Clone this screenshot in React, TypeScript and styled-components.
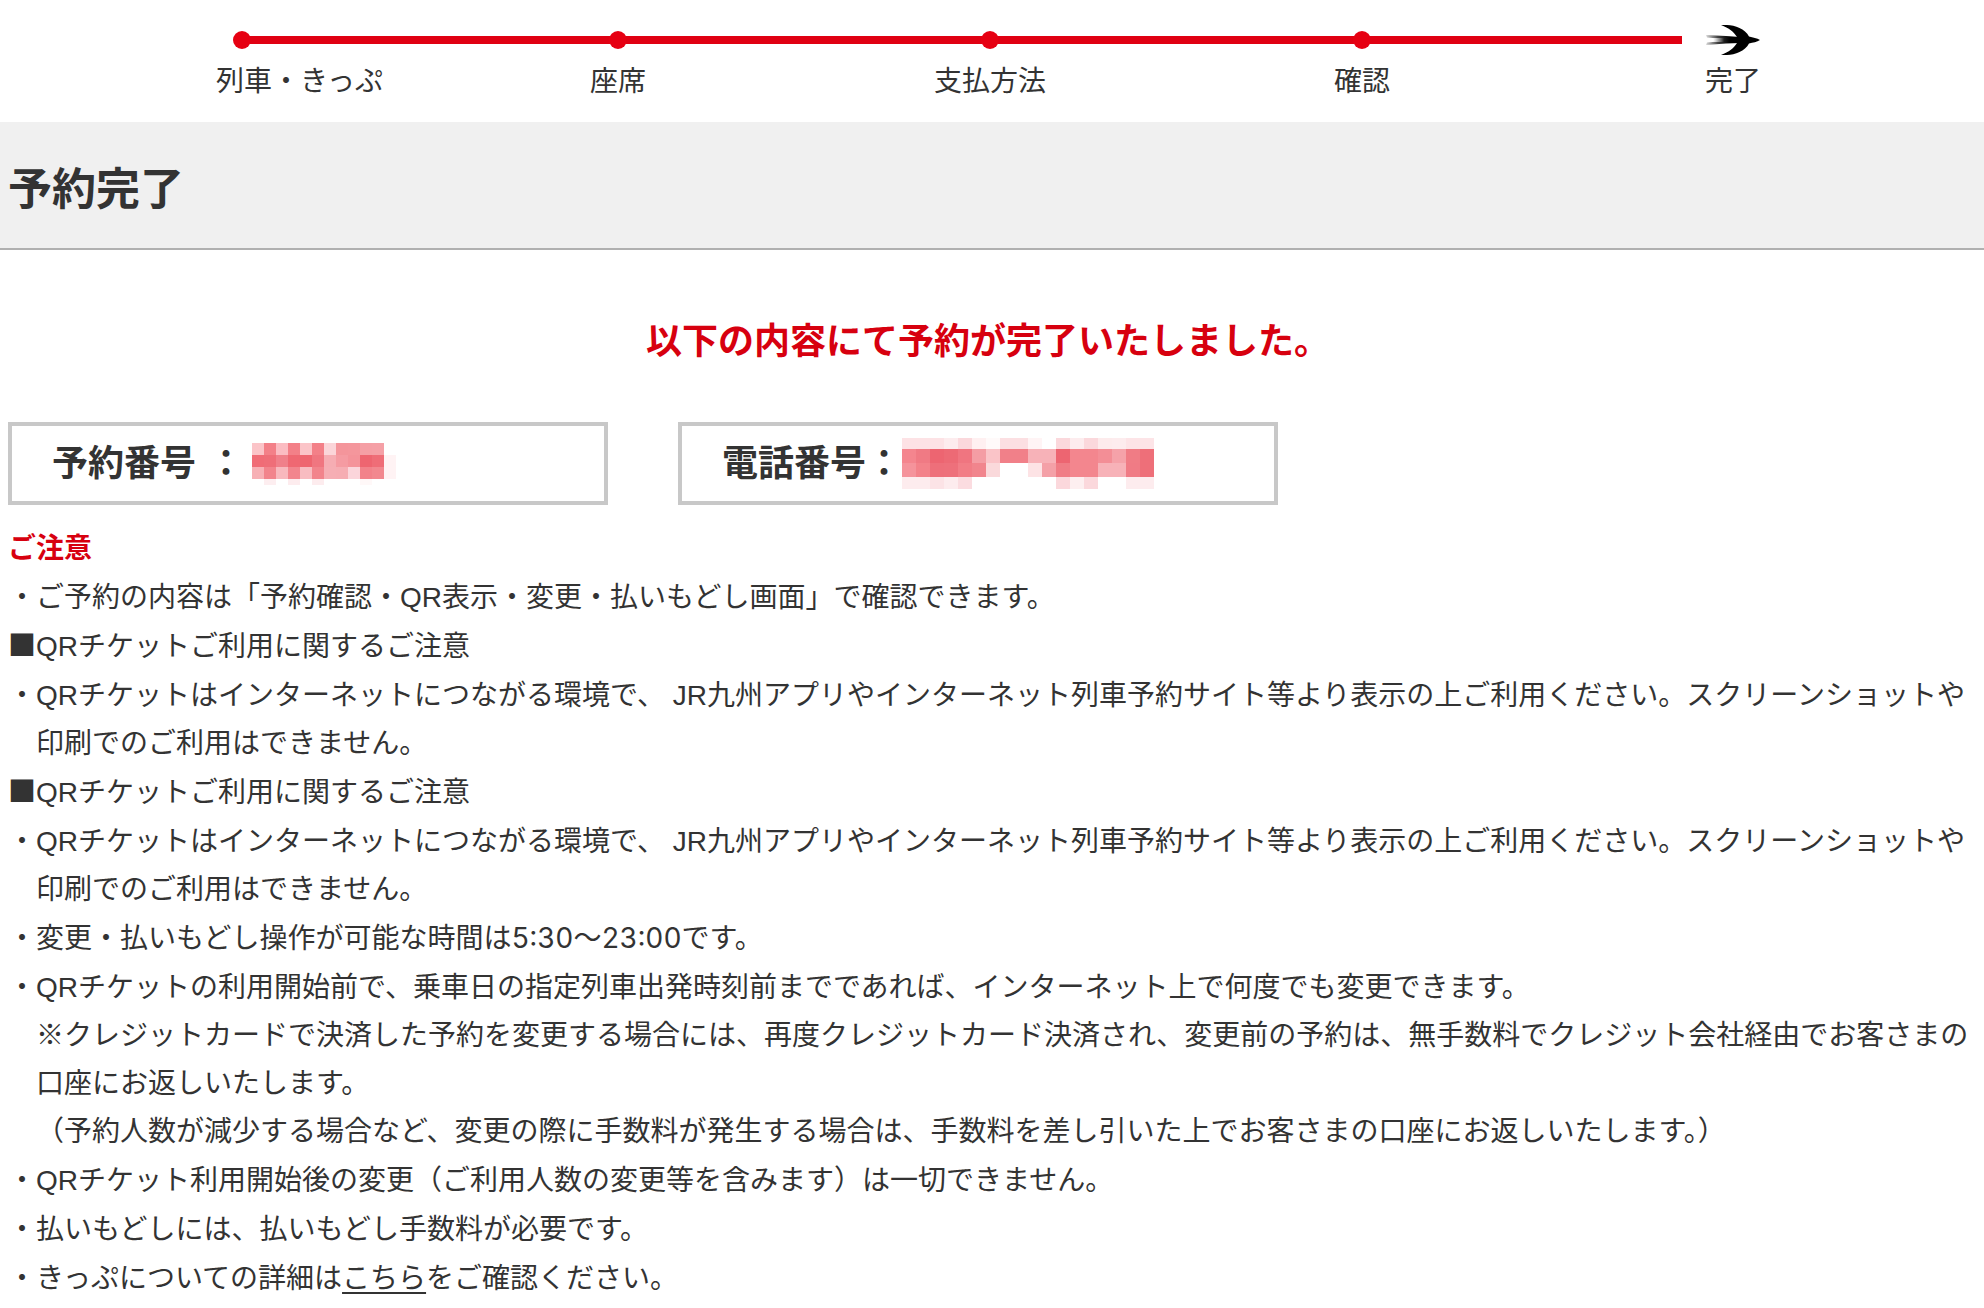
import React from "react";
import styled, { createGlobalStyle } from "styled-components";

const GlobalStyle = createGlobalStyle`
  * { box-sizing: border-box; }
  body {
    margin: 0;
    background: #ffffff;
    color: #333333;
    font-family: "Liberation Sans", "Noto Sans CJK JP", sans-serif;
    font-size: 28px;
    line-height: 48px;
  }
`;

const Steps = styled.ol`
  display: grid;
  grid-template-columns: 380fr repeat(3, 372fr) 370fr;
  margin: 0;
  padding: 24px 66px 16px 52px;
  list-style: none;
`;

const Step = styled.li`
  display: flex;
  flex-direction: column;
  gap: 2px;
`;

const Marker = styled.div`
  display: flex;
  align-items: center;
  height: 32px;
`;

const Rail = styled.span<{ $hidden?: boolean; $gap?: boolean }>`
  flex: 1;
  height: 8px;
  margin-right: ${(p) => (p.$gap ? "24px" : "0")};
  background: ${(p) => (p.$hidden ? "transparent" : "#e00012")};
`;

const RailSpace = styled.span`
  flex: 1;
  margin-left: 24px;
`;

const Dot = styled.span`
  width: 18px;
  height: 18px;
  margin: 0 -1px;
  border-radius: 50%;
  background: #e60012;
`;

const Label = styled.span<{ $start?: boolean }>`
  text-align: ${(p) => (p.$start ? "left" : "center")};
  margin-left: ${(p) => (p.$start ? "calc(50% - 26px)" : "0")};
  white-space: nowrap;
`;

const TitleBand = styled.header`
  padding: 36px 8px 26px;
  background: #f0f0f0;
  border-bottom: 2px solid #b0b0b0;
`;

const Title = styled.h1`
  margin: 0;
  font-size: 44px;
  line-height: 64px;
  font-weight: 700;
`;

const Content = styled.main`
  padding: 0 8px;
`;

const Message = styled.p`
  margin: 68px 8px 56px 0;
  color: #d7000f;
  font-size: 36px;
  font-weight: 700;
  text-align: center;
`;

const Summary = styled.dl`
  display: flex;
  flex-wrap: wrap;
  gap: 24px 70px;
  margin: 0 0 20px;
`;

const SummaryBox = styled.div`
  display: flex;
  align-items: center;
  width: 600px;
  min-height: 83px;
  padding: 12px 40px;
  border: 4px solid #c8c8c8;
  font-size: 36px;
  font-weight: 700;
`;

const SummaryTerm = styled.dt<{ $spaced?: boolean }>`
  display: flex;
  gap: ${(p) => (p.$spaced ? "12px" : "0")};
`;

const SummaryValue = styled.dd<{ $indent?: boolean }>`
  display: flex;
  margin: 0 0 0 ${(p) => (p.$indent ? "8px" : "0")};
`;

const NoticeTitle = styled.h2`
  margin: 0 0 1px;
  color: #d7000f;
  font-size: 28px;
  font-weight: 700;
`;

const NoticeList = styled.ul`
  display: flex;
  flex-direction: column;
  gap: 1px;
  margin: 0;
  padding: 0;
  list-style: none;
`;

const NoticeItem = styled.li`
  display: flex;
`;

const Bullet = styled.span`
  flex: none;
  width: 28px;
`;

const Square = styled.span`
  font-family: "Noto Sans CJK JP", sans-serif;
  line-height: 28px;
`;

const NoticeText = styled.div`
  flex: 1;
  min-width: 0;
`;

const Paragraph = styled.p`
  margin: 0;
`;

const Time = styled.span`
  font-family: Inter, "Noto Sans CJK JP", sans-serif;
  font-variant-numeric: tabular-nums;
  line-height: 28px;
`;

const TextLink = styled.a`
  color: inherit;
  text-decoration: underline;
  text-decoration-thickness: 2px;
  text-underline-offset: 4px;
`;

function Swallow() {
  return (
    <svg width="54" height="30" viewBox="0 0 54 30" aria-hidden="true">
      <defs>
        <linearGradient id="tail" x1="0" x2="1">
          <stop offset="0" stopColor="#000" stopOpacity="0.15" />
          <stop offset="0.35" stopColor="#000" stopOpacity="0.75" />
          <stop offset="0.7" stopColor="#000" />
        </linearGradient>
      </defs>
      <path
        d="M0 10 L20 11 L34 12 V18 L20 18.500 L0 20 L1 17.500 L18 16 L7 15 L18 14 L1 12.500 Z"
        fill="url(#tail)"
      />
      <path
        d="M54 15 C51 13 47 12.500 43 11.500 C39 4 29 0 21 0 L15 0 C23 3 28 7 31 12 L30 15 L31 18 C28 23 23 27 15 30 L21 30 C29 30 39 26 43 18.500 C47 17.500 51 17 54 15 Z"
        fill="#000"
      />
    </svg>
  );
}

type MosaicRow = { h: number; cells: string };

function Mosaic({ cell, rows, label }: { cell: number; rows: MosaicRow[]; label: string }) {
  const columns = Math.max(...rows.map((r) => r.cells.split(" ").length));
  const height = rows.reduce((sum, r) => sum + r.h, 0);
  let top = 0;
  return (
    <svg width={columns * cell} height={height} shapeRendering="crispEdges" role="img" aria-label={label}>
      {rows.map((row, r) => {
        const y = top;
        top += row.h;
        return row.cells
          .split(" ")
          .map((c, i) => (
            <rect key={`${r}-${i}`} x={i * cell} y={y} width={cell} height={row.h} fill={`#${c}`} />
          ));
      })}
    </svg>
  );
}

const reservationRows: MosaicRow[] = [
  { h: 12, cells: "fbc4c8 f38088 fbbcc2 f38088 fbc4c8 f38088 fbd5d9 f4959b f4969c f59fa5 f5a0a6 ffffff" },
  { h: 12, cells: "f06c76 ef6e78 f0808a ef6872 ee6670 f07680 f6adb3 f59ba2 f4939a ee6570 ef6d77 fff3f4" },
  { h: 12, cells: "f7b0b5 f2848c f8b8bd f2858d f8bcc1 f2848c f6aeb4 f6adb3 fbd5db f2828a f2888f fff3f4" },
  { h: 6, cells: "ffffff fdeef0 ffffff fdecee ffffff fdecee ffffff ffffff ffffff fff8f8 ffffff ffffff" },
];

const phoneRows: MosaicRow[] = [
  {
    h: 11,
    cells:
      "fde2e5 fde2e5 fde2e5 fdecee fbd8dc fff0f1 fffafa fcdfe2 fcdfe2 fff4f5 ffffff fbd8dc fdecee fbd8dc fdebec fdecee fde4e7 fde4e7",
  },
  {
    h: 14,
    cells:
      "f4858e f07a84 ed6571 ed6a75 f07580 f49da4 fac4c8 f18089 f18089 f7b2b8 f7b2b8 ed6571 f3868e f3868e f38e96 f5a2a9 f07c85 ee6f79",
  },
  {
    h: 14,
    cells:
      "f5939b f3828a ee6f7a ee707b f27d86 f1858d fad9db ffffff ffffff fde3e5 f4a0a7 f07c85 f3868e f3868e f7b2b8 f7b2b8 f07b85 ee6f79",
  },
  {
    h: 12,
    cells:
      "fdecee fdecee fce3e6 fdecee fbdce0 ffffff ffffff ffffff ffffff ffffff ffffff fbd8dc fdeff0 fbd8dc ffffff ffffff fdecee fdecee",
  },
];

const stepLabels = ["列車・きっぷ", "座席", "支払方法", "確認"];

const qrHeading = "QRチケットご利用に関するご注意";
const qrNotice =
  "QRチケットはインターネットにつながる環境で、 JR九州アプリやインターネット列車予約サイト等より表示の上ご利用ください。スクリーンショットや印刷でのご利用はできません。";

const notices: { square?: boolean; body: React.ReactNode }[] = [
  { body: "ご予約の内容は「予約確認・QR表示・変更・払いもどし画面」で確認できます。" },
  { square: true, body: qrHeading },
  { body: qrNotice },
  { square: true, body: qrHeading },
  { body: qrNotice },
  {
    body: (
      <>
        変更・払いもどし操作が可能な時間は<Time>5:30〜23:00</Time>です。
      </>
    ),
  },
  {
    body: (
      <>
        <Paragraph>
          QRチケットの利用開始前で、乗車日の指定列車出発時刻前までであれば、インターネット上で何度でも変更できます。
        </Paragraph>
        <Paragraph>
          ※クレジットカードで決済した予約を変更する場合には、再度クレジットカード決済され、変更前の予約は、無手数料でクレジット会社経由でお客さまの口座にお返しいたします。
        </Paragraph>
        <Paragraph>
          （予約人数が減少する場合など、変更の際に手数料が発生する場合は、手数料を差し引いた上でお客さまの口座にお返しいたします。）
        </Paragraph>
      </>
    ),
  },
  { body: "QRチケット利用開始後の変更（ご利用人数の変更等を含みます）は一切できません。" },
  { body: "払いもどしには、払いもどし手数料が必要です。" },
  {
    body: (
      <>
        きっぷについての詳細は<TextLink href="#details">こちら</TextLink>をご確認ください。
      </>
    ),
  },
];

export default function App() {
  return (
    <div lang="ja">
      <GlobalStyle />
      <Steps>
        {stepLabels.map((label, i) => (
          <Step key={label}>
            <Marker>
              <Rail $hidden={i === 0} />
              <Dot />
              <Rail />
            </Marker>
            <Label $start={i === 0}>{label}</Label>
          </Step>
        ))}
        <Step aria-current="step">
          <Marker>
            <Rail $gap />
            <Swallow />
            <RailSpace />
          </Marker>
          <Label>完了</Label>
        </Step>
      </Steps>
      <TitleBand>
        <Title>予約完了</Title>
      </TitleBand>
      <Content>
        <Message>以下の内容にて予約が完了いたしました。</Message>
        <Summary>
          <SummaryBox>
            <SummaryTerm $spaced>
              <span>予約番号</span>
              <span>：</span>
            </SummaryTerm>
            <SummaryValue $indent>
              <Mosaic cell={12} rows={reservationRows} label="予約番号" />
            </SummaryValue>
          </SummaryBox>
          <SummaryBox>
            <SummaryTerm>電話番号：</SummaryTerm>
            <SummaryValue>
              <Mosaic cell={14} rows={phoneRows} label="電話番号" />
            </SummaryValue>
          </SummaryBox>
        </Summary>
        <NoticeTitle>ご注意</NoticeTitle>
        <NoticeList>
          {notices.map((notice, i) => (
            <NoticeItem key={i}>
              <Bullet>{notice.square ? <Square>■</Square> : "・"}</Bullet>
              <NoticeText>{notice.body}</NoticeText>
            </NoticeItem>
          ))}
        </NoticeList>
      </Content>
    </div>
  );
}
